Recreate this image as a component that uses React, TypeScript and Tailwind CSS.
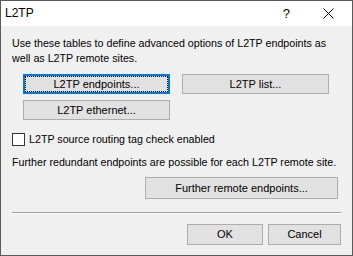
const font = { fontFamily: '"Liberation Sans", Arial, sans-serif' }

function Btn({
  label,
  className,
  focused,
}: {
  label: string
  className: string
  focused?: boolean
}) {
  return (
    <button
      type="button"
      className={[
        'flex items-center justify-center whitespace-nowrap bg-[#e1e1e1] text-[11px] text-black',
        focused ? 'border-2 border-[#0078d7] p-0' : 'border border-[#adadad]',
        className,
      ].join(' ')}
    >
      {focused ? (
        <span className="flex h-full w-full items-center justify-center outline-1 outline-black outline-dotted -outline-offset-1">
          {label}
        </span>
      ) : (
        label
      )}
    </button>
  )
}

export default function App() {
  return (
    <div
      style={font}
      className="flex h-[256px] w-[353px] flex-col overflow-hidden border border-[#5a5a5a] bg-[#f0f0f0] text-[10.7px] leading-[15px] text-black"
    >
      <div className="flex h-[25px] shrink-0 items-center bg-white pl-[4px]">
        <span className="text-[12px]">L2TP</span>
        <span className="ml-auto mr-[33px] text-[13px]">?</span>
        <svg width="11" height="11" viewBox="0 0 11 11" className="mr-[18px]">
          <path d="M0.5 0.5 L10.5 10.5 M10.5 0.5 L0.5 10.5" stroke="#000" strokeWidth="1" />
        </svg>
      </div>

      <div className="flex flex-col px-[11px]">
        <p className="mt-[10px] whitespace-nowrap">
          Use these tables to define advanced options of L2TP endpoints as
          <br />
          well as L2TP remote sites.
        </p>

        <div className="mt-[8px] flex gap-[12px] pl-[11px]">
          <Btn label="L2TP endpoints..." className="h-[20px] w-[147px]" focused />
          <Btn label="L2TP list..." className="h-[20px] w-[147px]" />
        </div>
        <div className="mt-[6px] flex pl-[11px]">
          <Btn label="L2TP ethernet..." className="h-[20px] w-[147px]" />
        </div>

        <label className="mt-[13px] flex h-[13px] items-center gap-[4px]">
          <span className="h-[13px] w-[13px] shrink-0 border border-[#333333] bg-white" />
          <span className="whitespace-nowrap">L2TP source routing tag check enabled</span>
        </label>

        <p className="mt-[9px] whitespace-nowrap">
          Further redundant endpoints are possible for each L2TP remote site.
        </p>

        <div className="mt-[7px] flex justify-end pr-[3px]">
          <Btn label="Further remote endpoints..." className="h-[22px] w-[193px]" />
        </div>

        <div className="mt-[13px] h-[2px] border-t border-[#a0a0a0] bg-white" />

        <div className="mt-[10px] flex justify-end gap-[5px]">
          <Btn label="OK" className="h-[21px] w-[76px]" />
          <Btn label="Cancel" className="h-[21px] w-[73px]" />
        </div>
      </div>
    </div>
  )
}
